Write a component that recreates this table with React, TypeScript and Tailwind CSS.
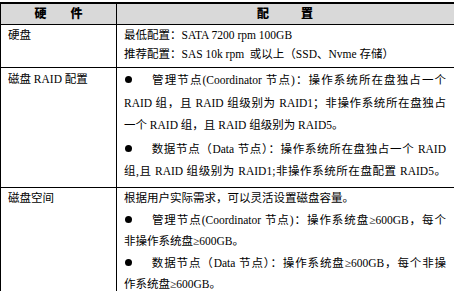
const font = { fontFamily: '"Liberation Serif", "Noto Sans CJK SC", serif' }

function Bullet() {
  return (
    <span className="inline-block w-[27px] pl-[1px] align-[1px]">
      <span className="inline-block w-[7px] h-[7px] rounded-full bg-black" />
    </span>
  )
}

function Line({ children, justify = false }: { children: React.ReactNode; justify?: boolean }) {
  return (
    <div
      className={
        'whitespace-nowrap ' + (justify ? 'text-justify [text-align-last:justify]' : 'text-left')
      }
    >
      {children}
    </div>
  )
}

export default function App() {
  return (
    <div className="w-[454px] h-[291px] overflow-hidden bg-white text-black" style={font}>
      <div className="w-[462px] mt-[2px] border-t-2 border-l border-r border-black text-[11.5px]">
        {/* 表头 */}
        <div className="flex h-[21px] bg-[#d9d9d9] border-b border-black font-black text-[12px]">
          <div className="w-[116px] shrink-0 border-r border-black flex items-center justify-center gap-[24px]">
            <span>硬</span>
            <span>件</span>
          </div>
          <div className="flex-1 flex items-center justify-center gap-[32px] pr-[8px]">
            <span>配</span>
            <span>置</span>
          </div>
        </div>

        {/* 硬盘 */}
        <div className="flex h-[43px] border-b border-black leading-[19px]">
          <div className="w-[116px] shrink-0 border-r border-black pl-[7px] pt-[1px]">硬盘</div>
          <div className="flex-1 pl-[7px] pt-[1px]">
            <Line>最低配置：SATA 7200 rpm 100GB</Line>
            <Line>推荐配置：SAS 10k rpm&nbsp; 或以上（SSD、Nvme 存储）</Line>
          </div>
        </div>

        {/* 磁盘 RAID 配置 */}
        <div className="flex h-[120px] border-b border-black leading-[22.5px]">
          <div className="w-[116px] shrink-0 border-r border-black pl-[7px]">磁盘 RAID 配置</div>
          <div className="w-[322px] pl-[7px] box-content">
            <Line justify>
              <Bullet />管理节点(Coordinator 节点)：操作系统所在盘独占一个
            </Line>
            <Line justify>RAID 组，且 RAID 组级别为 RAID1；非操作系统所在盘独占</Line>
            <Line>一个 RAID 组，且 RAID 组级别为 RAID5。</Line>
            <Line justify>
              <Bullet />数据节点（Data 节点）：操作系统所在盘独占一个 RAID
            </Line>
            <Line justify>组,且 RAID 组级别为 RAID1;非操作系统所在盘配置 RAID5。</Line>
          </div>
        </div>

        {/* 磁盘空间 */}
        <div className="flex h-[110px] leading-[21px]">
          <div className="w-[116px] shrink-0 border-r border-black pl-[7px]">磁盘空间</div>
          <div className="w-[322px] pl-[7px] box-content">
            <Line>根据用户实际需求，可以灵活设置磁盘容量。</Line>
            <Line justify>
              <Bullet />管理节点(Coordinator 节点)：操作系统盘≥600GB，每个
            </Line>
            <Line>非操作系统盘≥600GB。</Line>
            <Line justify>
              <Bullet />数据节点（Data 节点）：操作系统盘≥600GB，每个非操
            </Line>
            <Line>作系统盘≥600GB。</Line>
          </div>
        </div>
      </div>
    </div>
  )
}
